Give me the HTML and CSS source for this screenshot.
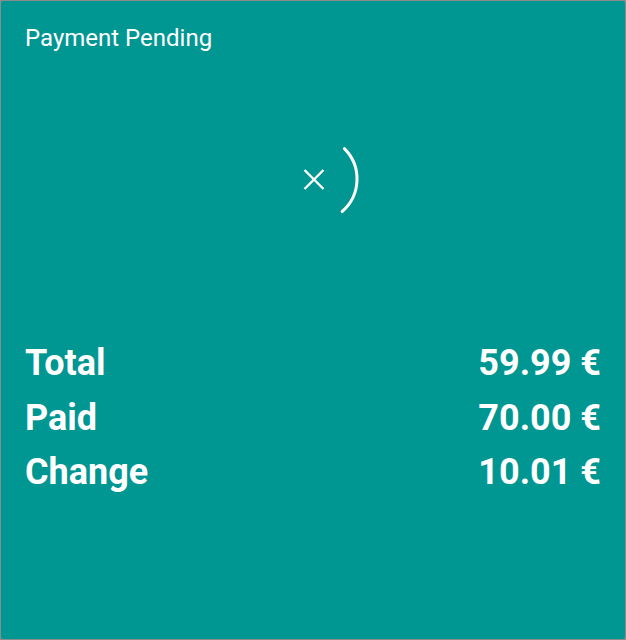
FILE: index.html
```html
<!DOCTYPE html>
<html lang="en">
<head>
<meta charset="utf-8">
<title>Payment Pending</title>
<link rel="stylesheet" href="styles.css">
</head>
<body>
<div class="card">
  <div class="title">Payment Pending</div>
  <div class="status">
    <svg class="spinner" width="100" height="100" viewBox="0 0 100 100" aria-hidden="true">
      <path d="M40.5 41 L59.5 60 M59.5 41 L40.5 60" stroke="#fff" stroke-width="2.4" fill="none"/>
      <path d="M80.4 19.6 A43 43 0 0 1 78.2 82.5" stroke="#fff" stroke-width="3" fill="none" stroke-linecap="round"/>
    </svg>
  </div>
  <div class="totals">
    <div class="row"><span>Total</span><span>59.99 €</span></div>
    <div class="row"><span>Paid</span><span>70.00 €</span></div>
    <div class="row"><span>Change</span><span>10.01 €</span></div>
  </div>
</div>
</body>
</html>
```

FILE: styles.css
```css
html, body {
  margin: 0;
  padding: 0;
  background: #8c8c8c;
}
.card {
  box-sizing: border-box;
  width: 626px;
  height: 640px;
  border: 1px solid #8c8c8c;
  border-radius: 3px;
  background: #009691;
  color: #fff;
  font-family: Roboto, "Liberation Sans", sans-serif;
  padding: 22px 24px 0 24px;
  display: flex;
  flex-direction: column;
}
.title {
  font-size: 24px;
  line-height: 30px;
}
.status {
  display: flex;
  justify-content: center;
  margin-top: 76px;
  padding-left: 1px;
}
.spinner {
  display: block;
}
.totals {
  margin-top: 107px;
  font-size: 36px;
  font-weight: 700;
  line-height: 54.5px;
}
.row {
  display: flex;
  justify-content: space-between;
}
```
